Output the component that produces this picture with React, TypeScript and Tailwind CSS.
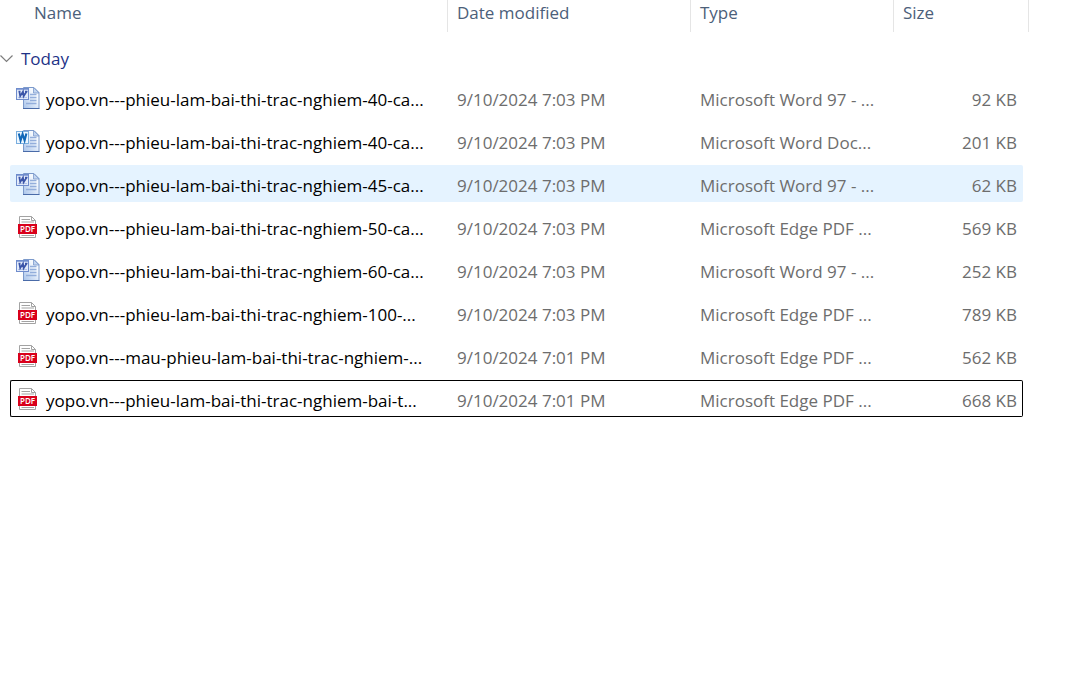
import { useState } from 'react';
import clsx from 'clsx';

type FileKind = 'doc' | 'docx' | 'pdf';

interface FileItem {
  name: string;
  modified: string;
  kind: FileKind;
  type: string;
  size: string;
}

const FILES: FileItem[] = [
  { name: 'yopo.vn---phieu-lam-bai-thi-trac-nghiem-40-ca...', modified: '9/10/2024 7:03 PM', kind: 'doc', type: 'Microsoft Word 97 - ...', size: '92 KB' },
  { name: 'yopo.vn---phieu-lam-bai-thi-trac-nghiem-40-ca...', modified: '9/10/2024 7:03 PM', kind: 'docx', type: 'Microsoft Word Doc...', size: '201 KB' },
  { name: 'yopo.vn---phieu-lam-bai-thi-trac-nghiem-45-ca...', modified: '9/10/2024 7:03 PM', kind: 'doc', type: 'Microsoft Word 97 - ...', size: '62 KB' },
  { name: 'yopo.vn---phieu-lam-bai-thi-trac-nghiem-50-ca...', modified: '9/10/2024 7:03 PM', kind: 'pdf', type: 'Microsoft Edge PDF ...', size: '569 KB' },
  { name: 'yopo.vn---phieu-lam-bai-thi-trac-nghiem-60-ca...', modified: '9/10/2024 7:03 PM', kind: 'doc', type: 'Microsoft Word 97 - ...', size: '252 KB' },
  { name: 'yopo.vn---phieu-lam-bai-thi-trac-nghiem-100-...', modified: '9/10/2024 7:03 PM', kind: 'pdf', type: 'Microsoft Edge PDF ...', size: '789 KB' },
  { name: 'yopo.vn---mau-phieu-lam-bai-thi-trac-nghiem-...', modified: '9/10/2024 7:01 PM', kind: 'pdf', type: 'Microsoft Edge PDF ...', size: '562 KB' },
  { name: 'yopo.vn---phieu-lam-bai-thi-trac-nghiem-bai-t...', modified: '9/10/2024 7:01 PM', kind: 'pdf', type: 'Microsoft Edge PDF ...', size: '668 KB' },
];

const HIGHLIGHTED_ROW = 2;
const FOCUSED_ROW = 7;

function WordIcon({ modern }: { modern: boolean }) {
  return (
    <svg viewBox="0 0 24 24" className="size-6 shrink-0" aria-hidden="true">
      <defs>
        <linearGradient id="word-page" x1="1" y1="0" x2="0" y2="1">
          <stop offset="0.3" stopColor="#f5f9fe" />
          <stop offset="1" stopColor="#a9c4ea" />
        </linearGradient>
      </defs>
      {/* Page with a folded corner */}
      <path d="M7.5 1.5h10.5l5 5v16H7.5z" fill="url(#word-page)" stroke="#7c9acb" />
      <path d="M7 22.5h16.5" stroke="#4a6ba8" />
      <path d="M17.5 1.5v5.5h5.5z" fill="#c3d6f0" stroke="#7c9acb" strokeWidth="0.8" />
      <path d="M14 8.5h6.5M14 11.5h6.5M14 14.5h6.5M10 17.5h10.5" stroke="#93aedb" strokeWidth="1.5" />
      {/* W badge */}
      {modern ? (
        <>
          <rect x="0.5" y="2.5" width="12" height="12" fill="#eef7ff" stroke="#7aaede" />
          <path d="M2.8 4.5 4.6 11.5l2-6.5 2 6.5 1.8-7" fill="none" stroke="#1268b8" strokeWidth="2.1" />
        </>
      ) : (
        <>
          <rect x="0.5" y="2.5" width="12" height="11" fill="#e3ebfa" stroke="#6f8ccc" />
          <path d="M1 3.5h11" stroke="#8ea6da" />
          <path d="M2 11.5h9" stroke="#b4c5e8" />
          <path d="M2.5 5.5h2M3.4 5.5 4.2 10.2l2.8-4.6.6 4.6 3-4.7M9 5.5h2.5" fill="none" stroke="#3b55a8" strokeWidth="1.7" />
        </>
      )}
    </svg>
  );
}

function PdfIcon() {
  return (
    <svg viewBox="0 0 24 24" className="size-6 shrink-0" aria-hidden="true">
      <path d="M3.5 1.5h12l4 4v17h-16z" fill="#fff" stroke="#a3a3a3" />
      <path d="M15.5 1.5v4h4M5.5 4.5H14M5.5 7H18M5.5 20.5H18" fill="none" stroke="#a3a3a3" />
      <rect x="2" y="9" width="19" height="10" fill="#d9001b" />
      <text
        x="11.5"
        y="17"
        textAnchor="middle"
        fill="#fff"
        className="font-['Open_Sans',sans-serif] text-[8px] font-semibold"
      >
        PDF
      </text>
    </svg>
  );
}

function Chevron({ open }: { open: boolean }) {
  return (
    <svg viewBox="0 0 14 14" className={clsx('size-3.5 shrink-0', !open && '-rotate-90')} aria-hidden="true">
      <path d="M0.5 3.5 6.5 9.5l6-6" fill="none" stroke="#7d7d7d" strokeWidth="1.2" />
    </svg>
  );
}

function HeaderCell({ label, first, span = 1 }: { label: string; first?: boolean; span?: number }) {
  return (
    <th scope="col" colSpan={span} className="h-8 border-r border-[#e5e5e5] p-0 text-left align-top font-normal">
      <button
        type="button"
        className={clsx('block w-full pt-px pb-[7px] text-left text-[#4c607a]', first ? 'pl-[34px]' : 'pl-[9px]')}
      >
        {label}
      </button>
    </th>
  );
}

function FileRow({ file, highlighted, focused }: { file: FileItem; highlighted: boolean; focused: boolean }) {
  const cell = clsx(
    'h-[37px] border-y p-0',
    highlighted && 'bg-[#e5f3ff]',
    focused ? 'border-black' : 'border-transparent',
  );

  return (
    <tr aria-selected={focused}>
      <td className="p-0" />
      <td className={clsx(cell, 'rounded-l-xs border-l text-black')}>
        <div className="flex items-center gap-1.5 pl-[5px]">
          {file.kind === 'pdf' ? <PdfIcon /> : <WordIcon modern={file.kind === 'docx'} />}
          <span className="pt-1">{file.name}</span>
        </div>
      </td>
      <td className={cell}>
        <div className="pt-1 pl-[9px]">{file.modified}</div>
      </td>
      <td className={cell}>
        <div className="pt-1 pl-[9px]">{file.type}</div>
      </td>
      <td className={clsx(cell, 'rounded-r-xs border-r text-right')}>
        <div className="pt-1 pr-[5px]">{file.size}</div>
      </td>
    </tr>
  );
}

export default function App() {
  const [open, setOpen] = useState(true);

  return (
    <main className="min-h-screen overflow-hidden bg-white pr-[57px] font-['Open_Sans',sans-serif] text-[17px] leading-6 whitespace-nowrap text-[#6d6d6d]">
      <table className="-mt-1.5 w-full table-fixed border-separate border-spacing-x-0 border-spacing-y-1.5">
        <colgroup>
          <col className="w-2.5" />
          <col />
          <col className="w-[243px]" />
          <col className="w-[203px]" />
          <col className="w-[129px]" />
          <col className="w-1.5" />
        </colgroup>
        <thead>
          <tr>
            <HeaderCell label="Name" first span={2} />
            <HeaderCell label="Date modified" />
            <HeaderCell label="Type" />
            <HeaderCell label="Size" span={2} />
          </tr>
        </thead>
        <tbody>
          {/* Group heading */}
          <tr>
            <th scope="rowgroup" colSpan={6} className="h-[35px] p-0 text-left font-normal">
              <button
                type="button"
                aria-expanded={open}
                onClick={() => setOpen(!open)}
                className="flex items-center gap-[7px] pt-1.5 text-[#1e3287]"
              >
                <Chevron open={open} />
                Today
              </button>
            </th>
          </tr>

          {open &&
            FILES.map((file, i) => (
              <FileRow key={i} file={file} highlighted={i === HIGHLIGHTED_ROW} focused={i === FOCUSED_ROW} />
            ))}
        </tbody>
      </table>
    </main>
  );
}
